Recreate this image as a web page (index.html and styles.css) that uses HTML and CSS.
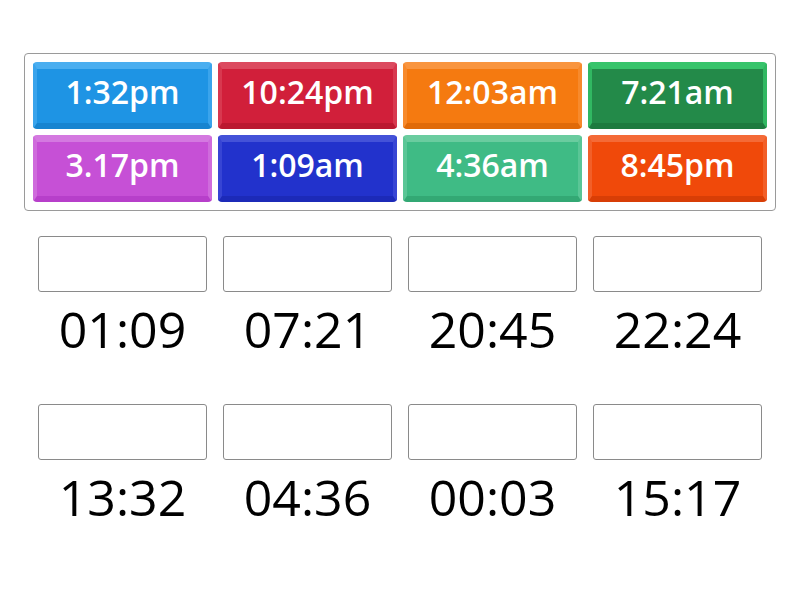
FILE: index.html
```html
<!DOCTYPE html>
<html>
<head>
<meta charset="utf-8">
<link rel="stylesheet" href="styles.css">
</head>
<body>
<div class="bank">
  <div class="tile t-blue">1:32pm</div>
  <div class="tile t-red">10:24pm</div>
  <div class="tile t-orange">12:03am</div>
  <div class="tile t-green">7:21am</div>
  <div class="tile t-purple">3.17pm</div>
  <div class="tile t-navy">1:09am</div>
  <div class="tile t-mint">4:36am</div>
  <div class="tile t-fire">8:45pm</div>
</div>
<div class="answers">
  <div class="cell"><div class="slot"></div><div class="label">01:09</div></div>
  <div class="cell"><div class="slot"></div><div class="label">07:21</div></div>
  <div class="cell"><div class="slot"></div><div class="label">20:45</div></div>
  <div class="cell"><div class="slot"></div><div class="label">22:24</div></div>
  <div class="cell"><div class="slot"></div><div class="label">13:32</div></div>
  <div class="cell"><div class="slot"></div><div class="label">04:36</div></div>
  <div class="cell"><div class="slot"></div><div class="label">00:03</div></div>
  <div class="cell"><div class="slot"></div><div class="label">15:17</div></div>
</div>
</body>
</html>
```
FILE: styles.css
```css
html, body {
  margin: 0;
  padding: 0;
  background: #ffffff;
  font-family: "Open Sans", "Noto Sans", sans-serif;
}

.bank {
  margin: 53px 0 0 24px;
  width: 734px;
  padding: 8px;
  border: 1px solid #9a9a9a;
  border-radius: 4px;
  display: grid;
  grid-template-columns: repeat(4, 179px);
  grid-auto-rows: 67px;
  gap: 6px;
}

.tile {
  box-sizing: border-box;
  border-radius: 4px;
  border-style: solid;
  border-width: 7px 4px 6px 4px;
  display: flex;
  align-items: center;
  justify-content: center;
  color: #ffffff;
  font-weight: 600;
  font-size: 32px;
  line-height: 1;
  padding-bottom: 8px;
}

.t-blue   { background: #1e94e4; border-color: #4aaef0 #3aa4ec #1784d0 #3aa4ec; }
.t-red    { background: #d11f3a; border-color: #dc4a5f #d8384f #bb1830 #d8384f; }
.t-orange { background: #f57a10; border-color: #f9953f #f78a2c #e06a08 #f78a2c; }
.t-green  { background: #238a49; border-color: #37c46b #31b862 #1d7a3f #31b862; }
.t-purple { background: #c650d6; border-color: #d479e0 #cf6bdc #b73fca #cf6bdc; }
.t-navy   { background: #2232cc; border-color: #4452d8 #3745d4 #1c2ab8 #3745d4; }
.t-mint   { background: #3fbb85; border-color: #6acc9f #5ac696 #33a874 #5ac696; }
.t-fire   { background: #f0490a; border-color: #f46a37 #f25f28 #d83e06 #f25f28; }

.answers {
  margin: 25px 0 0 30px;
  width: 740px;
  display: grid;
  grid-template-columns: repeat(4, 185px);
}

.cell {
  padding: 0 8px;
  height: 168px;
}

.slot {
  box-sizing: border-box;
  height: 56px;
  border: 1px solid #8a8a8a;
  border-radius: 3px;
  background: #ffffff;
}

.label {
  margin-top: 3px;
  text-align: center;
  font-size: 50px;
  line-height: 68px;
  color: #000000;
}
```
